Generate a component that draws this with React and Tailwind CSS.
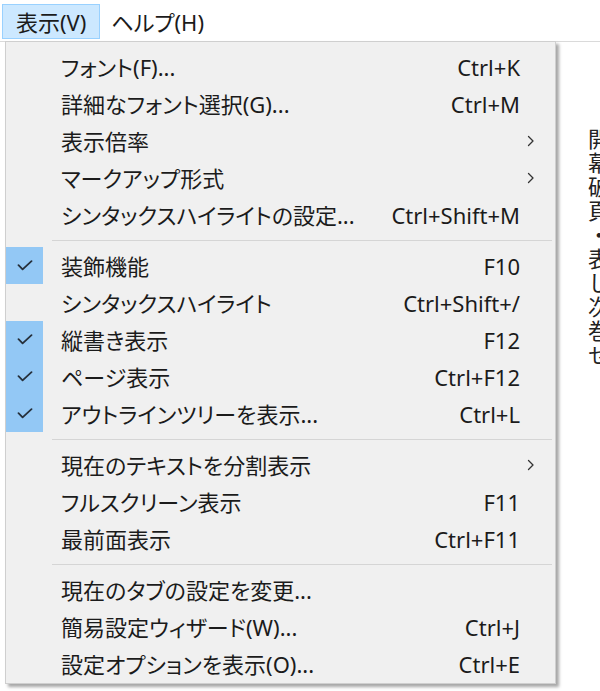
import React from "react";

const CheckIcon = () => (
  <svg width="16" height="11" viewBox="0 0 16 11" fill="none" stroke="#26303b" strokeWidth="1.8" strokeLinecap="round" strokeLinejoin="round">
    <path d="M1.5 5.2L5.6 9.3L14.5 1.2" />
  </svg>
);

const ChevronIcon = () => (
  <svg width="8" height="12" viewBox="0 0 8 12" fill="none" stroke="#333" strokeWidth="1.3" strokeLinecap="round" strokeLinejoin="round">
    <path d="M1.5 1.5L6 6L1.5 10.5" />
  </svg>
);

const groups = [
  [
    { label: "フォント(F)...", key: "Ctrl+K" },
    { label: "詳細なフォント選択(G)...", key: "Ctrl+M" },
    { label: "表示倍率", sub: true },
    { label: "マークアップ形式", sub: true },
    { label: "シンタックスハイライトの設定...", key: "Ctrl+Shift+M" },
  ],
  [
    { label: "装飾機能", key: "F10", checked: true },
    { label: "シンタックスハイライト", key: "Ctrl+Shift+/" },
    { label: "縦書き表示", key: "F12", checked: true },
    { label: "ページ表示", key: "Ctrl+F12", checked: true },
    { label: "アウトラインツリーを表示...", key: "Ctrl+L", checked: true },
  ],
  [
    { label: "現在のテキストを分割表示", sub: true },
    { label: "フルスクリーン表示", key: "F11" },
    { label: "最前面表示", key: "Ctrl+F11" },
  ],
  [
    { label: "現在のタブの設定を変更..." },
    { label: "簡易設定ウィザード(W)...", key: "Ctrl+J" },
    { label: "設定オプションを表示(O)...", key: "Ctrl+E" },
  ],
];

function MenuItem({ item }) {
  return (
    <div className="flex items-center h-[37px]">
      <div className="w-[55px] h-full flex items-center">
        {item.checked && (
          <div className="w-[37px] h-full bg-[#93c8f5] flex items-center justify-center">
            <CheckIcon />
          </div>
        )}
      </div>
      <div className="flex-1">{item.label}</div>
      <div className="text-right">{item.key}</div>
      <div className="w-[35px] flex items-center pl-[7px]">
        {item.sub && <ChevronIcon />}
      </div>
    </div>
  );
}

export default function App() {
  return (
    <div className="w-[600px] h-[691px] bg-white relative overflow-hidden text-[22px] text-[#1b1b1b] font-['Noto_Sans','Noto_Sans_CJK_JP',sans-serif] [font-feature-settings:'palt'] leading-none">
      {/* menu bar */}
      <div className="h-[42px] flex items-start pt-[4px] pl-[2px] border-b border-[#dadada]">
        <div className="h-[35px] px-[13px] flex items-center bg-[#cce8ff] border border-[#99d1ff]">
          表示(V)
        </div>
        <div className="h-[35px] px-[11px] flex items-center">ヘルプ(H)</div>
      </div>

      {/* document area */}
      <div className="pl-[587px] pt-[86px]">
        <div className="[writing-mode:vertical-rl] [font-feature-settings:normal] w-[22px] leading-[22px] tracking-[2px] text-[#222]">
          開幕破頁・表し次巻せ
        </div>
      </div>

      {/* dropdown menu */}
      <div className="absolute left-[5px] top-[41px] w-[551px] bg-[#f0f0f0] border border-[#cfcfcf] pt-[6px] pb-[1px] shadow-[3px_3px_3px_rgba(0,0,0,0.35)]">
        {groups.map((group, gi) => (
          <div key={gi}>
            {gi > 0 && (
              <div className="h-[14px] flex items-center pl-[46px] pr-[3px]">
                <div className="h-px w-full bg-[#d5d5d5]" />
              </div>
            )}
            {group.map((item) => (
              <MenuItem key={item.label} item={item} />
            ))}
          </div>
        ))}
      </div>
    </div>
  );
}
